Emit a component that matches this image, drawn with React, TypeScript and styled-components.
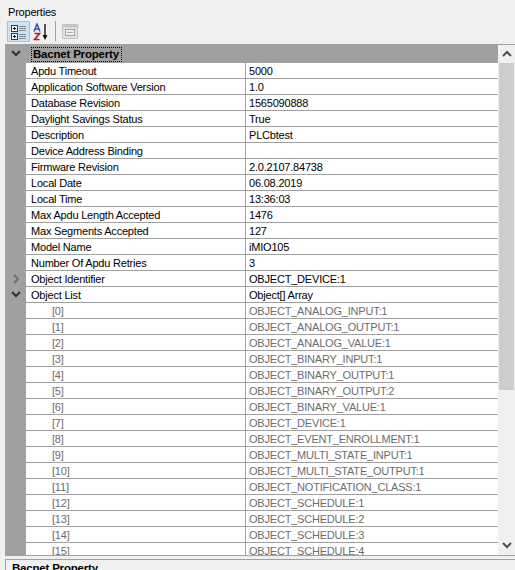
import styled, { createGlobalStyle } from 'styled-components';

const GlobalStyle = createGlobalStyle`
  html, body {
    margin: 0;
    padding: 0;
    background: #f0f0f0;
    overflow: hidden;
  }
`;

const baseRows: [string, string][] = [
  ['Apdu Timeout', '5000'],
  ['Application Software Version', '1.0'],
  ['Database Revision', '1565090888'],
  ['Daylight Savings Status', 'True'],
  ['Description', 'PLCbtest'],
  ['Device Address Binding', ''],
  ['Firmware Revision', '2.0.2107.84738'],
  ['Local Date', '06.08.2019'],
  ['Local Time', '13:36:03'],
  ['Max Apdu Length Accepted', '1476'],
  ['Max Segments Accepted', '127'],
  ['Model Name', 'iMIO105'],
  ['Number Of Apdu Retries', '3'],
];

const objectItems = [
  'OBJECT_ANALOG_INPUT:1',
  'OBJECT_ANALOG_OUTPUT:1',
  'OBJECT_ANALOG_VALUE:1',
  'OBJECT_BINARY_INPUT:1',
  'OBJECT_BINARY_OUTPUT:1',
  'OBJECT_BINARY_OUTPUT:2',
  'OBJECT_BINARY_VALUE:1',
  'OBJECT_DEVICE:1',
  'OBJECT_EVENT_ENROLLMENT:1',
  'OBJECT_MULTI_STATE_INPUT:1',
  'OBJECT_MULTI_STATE_OUTPUT:1',
  'OBJECT_NOTIFICATION_CLASS:1',
  'OBJECT_SCHEDULE:1',
  'OBJECT_SCHEDULE:2',
  'OBJECT_SCHEDULE:3',
  'OBJECT_SCHEDULE:4',
];

const Page = styled.div`
  width: 515px;
  height: 570px;
  display: flex;
  flex-direction: column;
  overflow: hidden;
  background: #f0f0f0;
  color: #000;
  font-family: "Liberation Sans", Arial, sans-serif;
  font-size: 11px;
  letter-spacing: -0.2px;
`;

const Title = styled.div`
  height: 19px;
  padding: 5px 0 0 8px;
  box-sizing: border-box;
  line-height: 15px;
`;

const Toolbar = styled.div`
  height: 25px;
  padding: 2px 0 0 7px;
  box-sizing: border-box;
  display: flex;
  align-items: flex-start;
  gap: 1px;
`;

const ToolButton = styled.div<{ $active?: boolean }>`
  width: ${p => (p.$active ? '23px' : '22px')};
  height: 21px;
  box-sizing: border-box;
  display: flex;
  align-items: center;
  justify-content: center;
  background: ${p => (p.$active ? '#cce4f7' : 'transparent')};
  border: 1px solid ${p => (p.$active ? '#90c8f0' : 'transparent')};
`;

const ToolSeparator = styled.div`
  width: 1px;
  height: 20px;
  margin: 0 2px 0 1px;
  background: #a0a0a0;
`;

const GridFrame = styled.div`
  height: 510px;
  margin-left: 5px;
  display: flex;
  border-top: 1px solid #a0a0a0;
  border-bottom: 1px solid #a0a0a0;
  box-sizing: content-box;
  overflow: hidden;
`;

const GridBody = styled.div`
  width: 493px;
  overflow: hidden;
  background: #fff;
`;

const GroupHeader = styled.div`
  height: 18px;
  display: flex;
  align-items: center;
  background: #a0a0a0;
`;

const Gutter = styled.div`
  width: 21px;
  height: 100%;
  flex: none;
  display: flex;
  align-items: center;
  justify-content: center;
  background: #a0a0a0;
`;

const GroupLabel = styled.div`
  margin-left: 5px;
  padding: 0 3px 0 2px;
  height: 15px;
  line-height: 15px;
  box-sizing: border-box;
  font-size: 11.5px;
  font-weight: 700;
  letter-spacing: -0.2px;
  outline: 1px dotted #000;
  outline-offset: -1px;
`;

const Row = styled.div`
  height: 16px;
  display: flex;
  box-sizing: border-box;
`;

const NameCell = styled.div<{ $indent?: boolean; $muted?: boolean }>`
  width: 220px;
  flex: none;
  box-sizing: border-box;
  padding-left: ${p => (p.$indent ? '26px' : '5px')};
  line-height: 17px;
  color: ${p => (p.$muted ? '#6d6d6d' : '#000')};
  border-bottom: 1px solid #a0a0a0;
  border-right: 1px solid #a0a0a0;
  white-space: nowrap;
  overflow: hidden;
`;

const ValueCell = styled.div<{ $muted?: boolean }>`
  flex: 1;
  padding-left: 3px;
  line-height: 17px;
  color: ${p => (p.$muted ? '#6d6d6d' : '#000')};
  border-bottom: 1px solid #a0a0a0;
  white-space: nowrap;
  overflow: hidden;
`;

const ScrollBar = styled.div`
  width: 17px;
  flex: none;
  display: flex;
  flex-direction: column;
  background: #f0f0f0;
  border-left: 1px solid #f0f0f0;
  box-sizing: border-box;
`;

const ScrollArrow = styled.div`
  height: 18px;
  flex: none;
  display: flex;
  align-items: center;
  justify-content: center;
`;

const ScrollTrack = styled.div`
  flex: 1;
`;

const ScrollThumb = styled.div`
  height: 327px;
  margin-right: 1px;
  background: #cdcdcd;
`;

const HelpPane = styled.div`
  flex: 1;
  margin: 3px 0 0 5px;
  padding: 1px 0 0 6px;
  border-top: 1px solid #a0a0a0;
  border-left: 1px solid #a0a0a0;
  font-size: 11.5px;
  font-weight: 700;
  line-height: 15px;
  overflow: hidden;
`;

function Chevron({ dir, color = '#2f2f2f' }: { dir: 'down' | 'right' | 'up'; color?: string }) {
  const points = {
    down: '1,2 5,6 9,2',
    up: '1,7 5,3 9,7',
    right: '3,1 7,5 3,9',
  }[dir];
  return (
    <svg width="10" height="10" viewBox="0 0 10 10">
      <polyline points={points} fill="none" stroke={color} strokeWidth="2" />
    </svg>
  );
}

function CategorizedIcon() {
  return (
    <svg width="16" height="16" viewBox="0 0 16 16" shapeRendering="crispEdges">
      <rect x="0.5" y="1.5" width="6" height="6" fill="#fff" stroke="#2c3e50" />
      <rect x="2" y="4" width="3" height="1" fill="#000" />
      <rect x="3" y="3" width="1" height="3" fill="#000" />
      <rect x="0.5" y="9.5" width="6" height="6" fill="#fff" stroke="#2c3e50" />
      <rect x="2" y="12" width="3" height="1" fill="#000" />
      <rect x="3" y="11" width="1" height="3" fill="#000" />
      <rect x="8" y="2" width="7" height="1" fill="#7f8a96" />
      <rect x="8" y="4" width="7" height="1" fill="#7f8a96" />
      <rect x="8" y="6" width="7" height="1" fill="#7f8a96" />
      <rect x="8" y="10" width="7" height="1" fill="#7f8a96" />
      <rect x="8" y="12" width="7" height="1" fill="#7f8a96" />
      <rect x="8" y="14" width="7" height="1" fill="#7f8a96" />
    </svg>
  );
}

function SortIcon() {
  return (
    <svg width="18" height="18" viewBox="0 0 18 18">
      <path d="M1 8.5 L4 1 L7 8.5 M2.2 6 H5.8" fill="none" stroke="#2b57b8" strokeWidth="1.5" />
      <path d="M1.5 10.5 H6.5 L1.5 16.5 H6.5" fill="none" stroke="#a02830" strokeWidth="1.7" />
      <path d="M12 1 V14" stroke="#111" strokeWidth="1.4" />
      <path d="M9.5 12 L12 17 L14.5 12 Z" fill="#111" />
    </svg>
  );
}

function PagesIcon() {
  return (
    <svg width="16" height="16" viewBox="0 0 16 16" shapeRendering="crispEdges">
      <rect x="0" y="0" width="16" height="15" fill="#c4c4c4" />
      <rect x="1" y="3" width="14" height="11" fill="#e0e0e0" />
      <rect x="3.5" y="5.5" width="9" height="6" fill="#ececec" stroke="#a6a6a6" />
      <rect x="5" y="8" width="6" height="1" fill="#b0b0b0" />
    </svg>
  );
}

export default function App() {
  return (
    <Page>
      <GlobalStyle />
      <Title>Properties</Title>
      <Toolbar>
        <ToolButton $active><CategorizedIcon /></ToolButton>
        <ToolButton><SortIcon /></ToolButton>
        <ToolSeparator />
        <ToolButton><PagesIcon /></ToolButton>
      </Toolbar>
      <GridFrame>
        <GridBody>
          <GroupHeader>
            <Gutter><Chevron dir="down" /></Gutter>
            <GroupLabel>Bacnet Property</GroupLabel>
          </GroupHeader>
          {baseRows.map(([name, value]) => (
            <Row key={name}>
              <Gutter />
              <NameCell>{name}</NameCell>
              <ValueCell>{value}</ValueCell>
            </Row>
          ))}
          <Row>
            <Gutter><Chevron dir="right" color="#707070" /></Gutter>
            <NameCell>Object Identifier</NameCell>
            <ValueCell>OBJECT_DEVICE:1</ValueCell>
          </Row>
          <Row>
            <Gutter><Chevron dir="down" /></Gutter>
            <NameCell>Object List</NameCell>
            <ValueCell>Object[] Array</ValueCell>
          </Row>
          {objectItems.map((item, i) => (
            <Row key={item}>
              <Gutter />
              <NameCell $indent $muted>[{i}]</NameCell>
              <ValueCell $muted>{item}</ValueCell>
            </Row>
          ))}
        </GridBody>
        <ScrollBar>
          <ScrollArrow><Chevron dir="up" color="#505050" /></ScrollArrow>
          <ScrollTrack><ScrollThumb /></ScrollTrack>
          <ScrollArrow><Chevron dir="down" color="#505050" /></ScrollArrow>
        </ScrollBar>
      </GridFrame>
      <HelpPane>Bacnet Property</HelpPane>
    </Page>
  );
}
